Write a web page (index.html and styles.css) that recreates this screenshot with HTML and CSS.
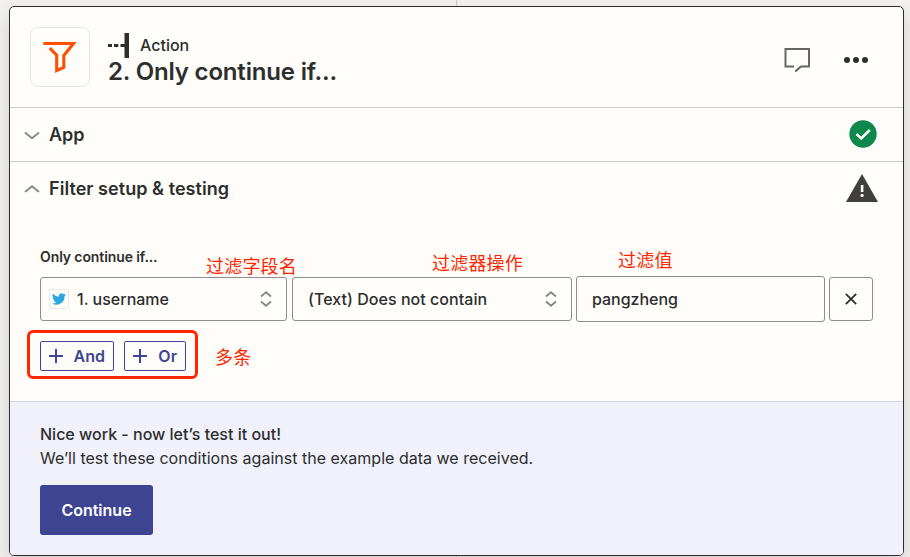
FILE: index.html
```html
<!DOCTYPE html>
<html lang="en">
<head>
<meta charset="utf-8">
<title>Only continue if...</title>
<link rel="stylesheet" href="styles.css">
</head>
<body>
<main class="canvas">
  <article class="card">
    <header class="card-header">
      <div class="app-icon">
        <svg width="60" height="60" viewBox="0 0 60 60" fill="none" stroke="#ff4f00" stroke-width="3.1"><path d="M13.3 16.5H43.5L33.8 28.5V40.3L26.7 43.6V28.2L19.8 21.2"/></svg>
      </div>
      <div class="heading">
        <div class="kind">
          <svg width="22" height="26" viewBox="0 0 22 26" fill="#2d2e2e"><path d="M0 11h4v3H0zM6 11h4.3v3H6zM12.5 11h5v3h-5zM16.5 0h4.5v25h-4.5z"/></svg>
          <span>Action</span>
        </div>
        <h1>2. Only continue if...</h1>
      </div>
      <svg class="comment" width="28" height="28" viewBox="0 0 28 28" fill="none" stroke="#666562" stroke-width="2"><path d="M11 19.4H2.5V2H26V19.4H18L12.2 24.6"/></svg>
      <svg class="more" width="26" height="8" viewBox="0 0 26 8" fill="#2d2e2e"><circle cx="4" cy="4" r="3"/><circle cx="13" cy="4" r="3"/><circle cx="22" cy="4" r="3"/></svg>
    </header>
    <section class="row app-row">
      <svg class="down" width="16" height="10" viewBox="0 0 16 10" fill="none" stroke="#888783" stroke-width="1.9"><path d="M1 1.5L8 7.2L15 1.5"/></svg>
      <h2>App</h2>
      <svg class="status" width="28" height="28" viewBox="0 0 28 28"><circle cx="14" cy="14" r="13.7" fill="#0f884e"/><path d="M7.5 14L12.2 18.4L20.8 10" fill="none" stroke="#fffdf9" stroke-width="2.5"/></svg>
    </section>
    <section class="setup">
      <div class="row setup-head">
        <svg class="up" width="16" height="10" viewBox="0 0 16 10" fill="none" stroke="#888783" stroke-width="1.9"><path d="M1 8L8 2.2L15 8"/></svg>
        <h2>Filter setup &amp; testing</h2>
        <svg class="status" width="32" height="28" viewBox="0 0 32 28"><path d="M16 0L32 28H0Z" fill="#403f3e"/><path d="M14.8 11h2.6v7h-2.6z" fill="#fffdf9"/><circle cx="16.1" cy="21.4" r="1.6" fill="#fffdf9"/></svg>
      </div>
      <div class="form">
        <div class="label"><span>Only continue if...</span></div>
        <div class="fields">
          <div class="select field-name">
            <span class="app-badge"><svg width="14" height="12" viewBox="0 0 24 20" fill="#2ca7e0"><path d="M24 2.6a10 10 0 0 1-2.8.8A5 5 0 0 0 23.3.6a10 10 0 0 1-3.1 1.2 4.9 4.9 0 0 0-8.4 4.5A14 14 0 0 1 1.7 1.2a4.9 4.9 0 0 0 1.5 6.6A5 5 0 0 1 1 7.2a4.9 4.9 0 0 0 3.9 4.9 5 5 0 0 1-2.2.1 4.9 4.9 0 0 0 4.6 3.4A10 10 0 0 1 0 17.6 14 14 0 0 0 21.5 5.1 10 10 0 0 0 24 2.6Z"/></svg></span>
            <span class="value">1. username</span>
            <svg class="sort" width="12" height="16" viewBox="0 0 12 16" fill="none" stroke="#888783" stroke-width="1.8"><path d="M1 5.5L6 1.2L11 5.5M1 10.5L6 14.8L11 10.5"/></svg>
            <span class="note note-name">过滤字段名</span>
          </div>
          <div class="select field-op">
            <span class="value op-value">(Text) Does not contain</span>
            <svg class="sort" width="12" height="16" viewBox="0 0 12 16" fill="none" stroke="#888783" stroke-width="1.8"><path d="M1 5.5L6 1.2L11 5.5M1 10.5L6 14.8L11 10.5"/></svg>
            <span class="note note-op">过滤器操作</span>
          </div>
          <div class="select field-value">
            <span class="value text-value">pangzheng</span>
            <span class="note note-value">过滤值</span>
          </div>
          <div class="select remove"><svg width="12" height="12" viewBox="0 0 12 12" stroke="#2d2e2e" stroke-width="1.8"><path d="M.8.8L11.2 11.2M11.2.8L.8 11.2"/></svg></div>
        </div>
        <div class="logic">
          <div class="add and"><svg width="14" height="14" viewBox="0 0 14 14" stroke="#3d4592" stroke-width="2"><path d="M7 0V14M0 7H14"/></svg><span>And</span></div>
          <div class="add or"><svg width="14" height="14" viewBox="0 0 14 14" stroke="#3d4592" stroke-width="2"><path d="M7 0V14M0 7H14"/></svg><span>Or</span></div>
          <div class="marker"></div>
          <span class="note note-logic">多条</span>
        </div>
      </div>
    </section>
    <footer class="result">
      <p class="strong"><span>Nice work - now let’s test it out!</span></p>
      <p class="detail"><span>We’ll test these conditions against the example data we received.</span></p>
      <div class="continue"><span>Continue</span></div>
    </footer>
  </article>
</main>
</body>
</html>
```
FILE: styles.css
```css
* { box-sizing: border-box; }
body {
  margin: 0;
  font-family: Inter, "Liberation Sans", "Noto Sans CJK SC", sans-serif;
  font-size: 16px;
  color: #2d2e2e;
  background: #f3f2ee;
}
svg { display: block; flex: none; }
h1, h2, p { margin: 0; }
.canvas {
  width: 910px;
  height: 557px;
  padding: 6px 6px 1px 9px;
  overflow: hidden;
  background: linear-gradient(#cdccc8, #cdccc8) 456px 0 / 1px 557px no-repeat, #f3f2ee;
}
.card {
  display: flex;
  flex-direction: column;
  height: 550px;
  border: 1px solid #2d2e2e;
  border-radius: 5px;
  overflow: hidden;
  background: #fffdf9;
  box-shadow: 0 8px 20px rgba(45, 46, 46, .18);
}
.card-header {
  display: flex;
  height: 101px;
  padding: 20px 34px 0 20px;
  border-bottom: 1px solid #cbcac6;
}
.app-icon {
  width: 60px;
  height: 60px;
  border: 1px solid #e8e7e3;
  border-radius: 8px;
}
.app-icon svg { margin: -1px; }
.heading { flex: 1; margin-left: 18px; padding-top: 5px; white-space: nowrap; }
.kind { display: flex; height: 26px; gap: 10px; line-height: 26px; font-weight: 500; }
.kind svg { margin-top: 1px; }
h1 { font-size: 24px; line-height: 28px; font-weight: 600; letter-spacing: -.17px; }
.comment { margin: 20px 32px 0 0; }
.more { margin-top: 29px; }
.row {
  display: flex;
  align-items: center;
  height: 54px;
  padding: 0 26px 0 14px;
  border-bottom: 1px solid #cbcac6;
}
.row h2 { flex: 1; margin-left: 9px; font-size: 18px; line-height: 26px; font-weight: 600; }
.row .status { margin-bottom: 1px; }
.down { margin-top: 3px; }
.setup { height: 240px; border-bottom: 1px solid #d3d4e8; }
.setup-head { border-bottom: 0; padding-right: 25px; }
.setup-head h2 { letter-spacing: .05px; }
.setup-head .status { margin-bottom: 3px; }
.up { margin-bottom: 1px; }
.form { padding: 31px 30px 0; }
.label { height: 29px; font-size: 14px; line-height: 20px; font-weight: 600; letter-spacing: -.1px; }
.fields { display: flex; align-items: center; }
.select {
  position: relative;
  display: flex;
  align-items: center;
  height: 44px;
  border: 1px solid #8f8e8a;
  border-radius: 3px;
  font-weight: 500;
}
.field-name { width: 247px; margin-right: 5px; padding: 0 14px 0 8px; }
.field-op { width: 280px; margin-right: 4px; padding: 0 14px 0 15px; }
.field-value { width: 249px; height: 46px; margin-right: 4px; padding: 0 15px; }
.remove { width: 44px; justify-content: center; }
.value { white-space: nowrap; }
.op-value { letter-spacing: .04px; }
.text-value { letter-spacing: -.03px; padding-bottom: 1px; }
.sort { margin-left: auto; }
.app-badge {
  display: grid;
  place-items: center;
  width: 20px;
  height: 20px;
  margin-right: 8px;
  border: 1px solid #e8e7e3;
  border-radius: 2px;
}
.note {
  position: absolute;
  font-family: "Noto Sans CJK SC", sans-serif;
  font-size: 18px;
  line-height: 24px;
  font-weight: 400;
  letter-spacing: .2px;
  color: #ff2600;
  white-space: nowrap;
}
.note-name { left: 165px; top: -25px; }
.note-op { left: 139px; top: -28px; }
.note-value { left: 41px; top: -30px; }
.logic { position: relative; display: flex; gap: 10px; margin-top: 19px; }
.add {
  display: flex;
  align-items: center;
  justify-content: space-between;
  height: 30px;
  padding: 0 8px;
  border: 1px solid #3d4592;
  border-radius: 2px;
  color: #3d4592;
  font-weight: 600;
}
.and { width: 74px; }
.or { width: 62px; }
.marker {
  position: absolute;
  left: -13px;
  top: -11px;
  width: 171px;
  height: 49px;
  border: 3px solid #ff2600;
  border-radius: 6px;
}
.note-logic { left: 175px; top: 3px; }
.result { flex: 1; padding: 20px 30px 0; background: #f0f1fa; line-height: 24px; }
.strong { font-weight: 500; }
.detail { letter-spacing: .015px; }
.continue {
  display: flex;
  align-items: center;
  justify-content: center;
  width: 113px;
  height: 50px;
  margin-top: 15px;
  border-radius: 3px;
  background: #3d4592;
  color: #fffdf9;
  font-weight: 600;
}
```
